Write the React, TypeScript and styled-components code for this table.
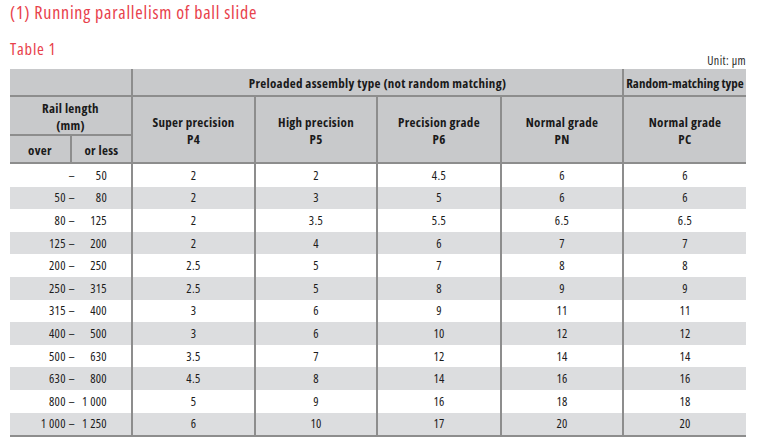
import React from "react";
import styled, { createGlobalStyle } from "styled-components";

const FONT = `"Open Sans", "DejaVu Sans Condensed", sans-serif`;

const Global = createGlobalStyle`
  html, body { margin: 0; padding: 0; background: #ffffff; }
  body { font-family: ${FONT}; font-stretch: 75%; color: #1c1c1c; }
`;

const Page = styled.div`
  width: 760px;
  height: 445px;
  padding: 0 14px 0 10px;
  box-sizing: border-box;
  display: flex;
  flex-direction: column;
`;

const Title = styled.h1`
  margin: 2px 0 0 0;
  font-size: 18px;
  line-height: 21px;
  font-weight: normal;
  letter-spacing: 0.75px;
  color: #e8414b;
`;

const Subtitle = styled.h2`
  margin: 16px 0 0 0;
  font-size: 16.5px;
  line-height: 19px;
  font-weight: normal;
  letter-spacing: 0.8px;
  color: #e8414b;
`;

const Unit = styled.div`
  align-self: flex-end;
  margin-top: -4px;
  font-size: 12px;
  line-height: 14px;
  letter-spacing: 0.4px;
  color: #2a2a2a;
`;

const COLS = "62px 61px 123px 122px 124px 122px 122px";

const Header = styled.div`
  margin-top: 1px;
  display: grid;
  grid-template-columns: ${COLS};
  grid-template-rows: 28px 39px 28px;
  background: #c8c9cb;
`;

const HCell = styled.div<{ $col: string; $row: string; $right?: boolean; $tight?: boolean }>`
  grid-column: ${(p) => p.$col};
  grid-row: ${(p) => p.$row};
  box-sizing: border-box;
  padding-top: 3px;
  border-bottom: 2px solid #8d8d8d;
  border-right: ${(p) => (p.$right ? "2px solid #8d8d8d" : "none")};
  display: flex;
  flex-direction: column;
  align-items: center;
  justify-content: center;
  text-align: center;
  white-space: nowrap;
  font-weight: bold;
  font-size: 13px;
  letter-spacing: ${(p) => (p.$tight ? "0" : "0.3px")};
  line-height: 17.5px;
  color: #1a1a1a;
`;

const Body = styled.div`
  display: grid;
  grid-template-columns: ${COLS};
  grid-auto-rows: 22.6px;
  border-bottom: 2px solid #8d8d8d;
`;

const DCell = styled.div<{ $shade: boolean; $span?: number; $right?: boolean }>`
  grid-column: span ${(p) => p.$span ?? 1};
  box-sizing: border-box;
  background: ${(p) => (p.$shade ? "#dcdddf" : "#ffffff")};
  border-right: ${(p) => (p.$right ? "2px solid #8d8d8d" : "none")};
  display: flex;
  align-items: center;
  justify-content: center;
  font-size: 12.5px;
  letter-spacing: 0.3px;
  color: #1c1c1c;
`;

const RangeCell = styled(DCell)`
  justify-content: flex-start;
`;

const Over = styled.span`
  width: 65px;
  text-align: right;
  white-space: pre;
`;

const Less = styled.span`
  width: 32px;
  text-align: right;
  white-space: pre;
`;

type Row = { over: string; less: string; v: string[] };

const rows: Row[] = [
  { over: "", less: "50", v: ["2", "2", "4.5", "6", "6"] },
  { over: "50", less: "80", v: ["2", "3", "5", "6", "6"] },
  { over: "80", less: "125", v: ["2", "3.5", "5.5", "6.5", "6.5"] },
  { over: "125", less: "200", v: ["2", "4", "6", "7", "7"] },
  { over: "200", less: "250", v: ["2.5", "5", "7", "8", "8"] },
  { over: "250", less: "315", v: ["2.5", "5", "8", "9", "9"] },
  { over: "315", less: "400", v: ["3", "6", "9", "11", "11"] },
  { over: "400", less: "500", v: ["3", "6", "10", "12", "12"] },
  { over: "500", less: "630", v: ["3.5", "7", "12", "14", "14"] },
  { over: "630", less: "800", v: ["4.5", "8", "14", "16", "16"] },
  { over: "800", less: "1 000", v: ["5", "9", "16", "18", "18"] },
  { over: "1 000", less: "1 250", v: ["6", "10", "17", "20", "20"] },
];

export default function App() {
  return (
    <>
      <Global />
      <Page>
        <Title>(1) Running parallelism of ball slide</Title>
        <Subtitle>Table 1</Subtitle>
        <Unit>Unit: μm</Unit>
        <Header>
          <HCell $col="1 / 3" $row="1" $right />
          <HCell $col="3 / 7" $row="1" $right>
            Preloaded assembly type (not random matching)
          </HCell>
          <HCell $col="7" $row="1" $tight>
            Random-matching type
          </HCell>
          <HCell $col="1 / 3" $row="2" $right>
            <span>Rail length</span>
            <span>(mm)</span>
          </HCell>
          <HCell $col="1" $row="3" $right>
            over
          </HCell>
          <HCell $col="2" $row="3" $right>
            or less
          </HCell>
          <HCell $col="3" $row="2 / 4" $right>
            <span>Super precision</span>
            <span>P4</span>
          </HCell>
          <HCell $col="4" $row="2 / 4" $right>
            <span>High precision</span>
            <span>P5</span>
          </HCell>
          <HCell $col="5" $row="2 / 4" $right>
            <span>Precision grade</span>
            <span>P6</span>
          </HCell>
          <HCell $col="6" $row="2 / 4" $right>
            <span>Normal grade</span>
            <span>PN</span>
          </HCell>
          <HCell $col="7" $row="2 / 4">
            <span>Normal grade</span>
            <span>PC</span>
          </HCell>
        </Header>
        <Body>
          {rows.map((r, i) => {
            const shade = i % 2 === 1;
            return (
              <React.Fragment key={i}>
                <RangeCell $shade={shade} $span={2} $right>
                  <Over>{r.over ? `${r.over} –` : "–"}</Over>
                  <Less>{r.less}</Less>
                </RangeCell>
                {r.v.map((v, j) => (
                  <DCell key={j} $shade={shade} $right={j < 4}>
                    {v}
                  </DCell>
                ))}
              </React.Fragment>
            );
          })}
        </Body>
      </Page>
    </>
  );
}
